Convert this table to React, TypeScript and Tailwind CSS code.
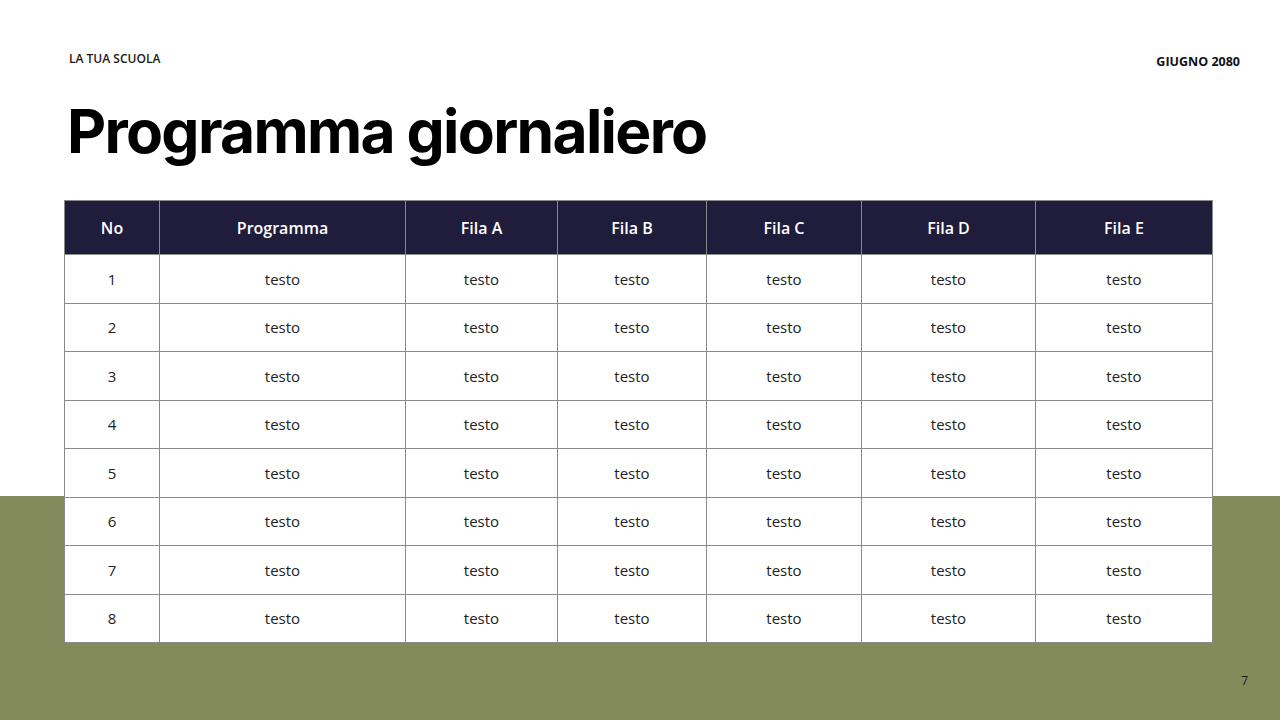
import React from "react";

const cols = [
  { label: "No", w: "w-[95px]" },
  { label: "Programma", w: "w-[246px]" },
  { label: "Fila A", w: "w-[152px]" },
  { label: "Fila B", w: "w-[149px]" },
  { label: "Fila C", w: "w-[155px]" },
  { label: "Fila D", w: "w-[174px]" },
  { label: "Fila E", w: "w-[177px]" },
];

export default function App() {
  const rows = [1, 2, 3, 4, 5, 6, 7, 8];
  return (
    <div
      className="w-[1280px] h-[720px] overflow-hidden flex flex-col bg-[linear-gradient(to_bottom,#ffffff_496px,#838b5b_496px)]"
      style={{ fontFamily: "'Open Sans', 'Noto Sans', sans-serif" }}
    >
      <div className="flex justify-between items-start pl-[69px] pr-[40px] pt-[52px]">
        <div className="text-[12px] font-semibold text-[#1a1a1a] leading-[14px]">LA TUA SCUOLA</div>
        <div className="text-[12.5px] font-bold text-[#111] leading-[14px] mt-[3px]">GIUGNO 2080</div>
      </div>
      <h1
        className="pl-[67px] mt-[27px] text-[60.5px] font-bold leading-[70px] text-black tracking-[-1.7px]"
        style={{ fontFamily: "Inter, 'Liberation Sans', sans-serif" }}
      >
        Programma giornaliero
      </h1>
      <div className="pl-[64px] mt-[34px]">
        <table className="border-collapse text-[15px]" style={{ fontFamily: "'Open Sans', 'Noto Sans', sans-serif" }}>
          <thead>
            <tr className="bg-[#1f1c3c] h-[54px]">
              {cols.map((c) => (
                <th key={c.label} className={`${c.w} border border-[#8a8a8a] text-white font-semibold text-[16px] text-center p-0`}>
                  {c.label}
                </th>
              ))}
            </tr>
          </thead>
          <tbody>
            {rows.map((r) => (
              <tr key={r} className="bg-white h-[48.5px]">
                <td className="border border-[#8a8a8a] text-center text-[#222] p-0">{r}</td>
                {cols.slice(1).map((c) => (
                  <td key={c.label} className="border border-[#8a8a8a] text-center text-[#222] p-0">
                    testo
                  </td>
                ))}
              </tr>
            ))}
          </tbody>
        </table>
      </div>
      <div className="flex justify-end pr-[32px] mt-[29px]">
        <span className="text-[12px] text-[#1a1a1a]">7</span>
      </div>
    </div>
  );
}
